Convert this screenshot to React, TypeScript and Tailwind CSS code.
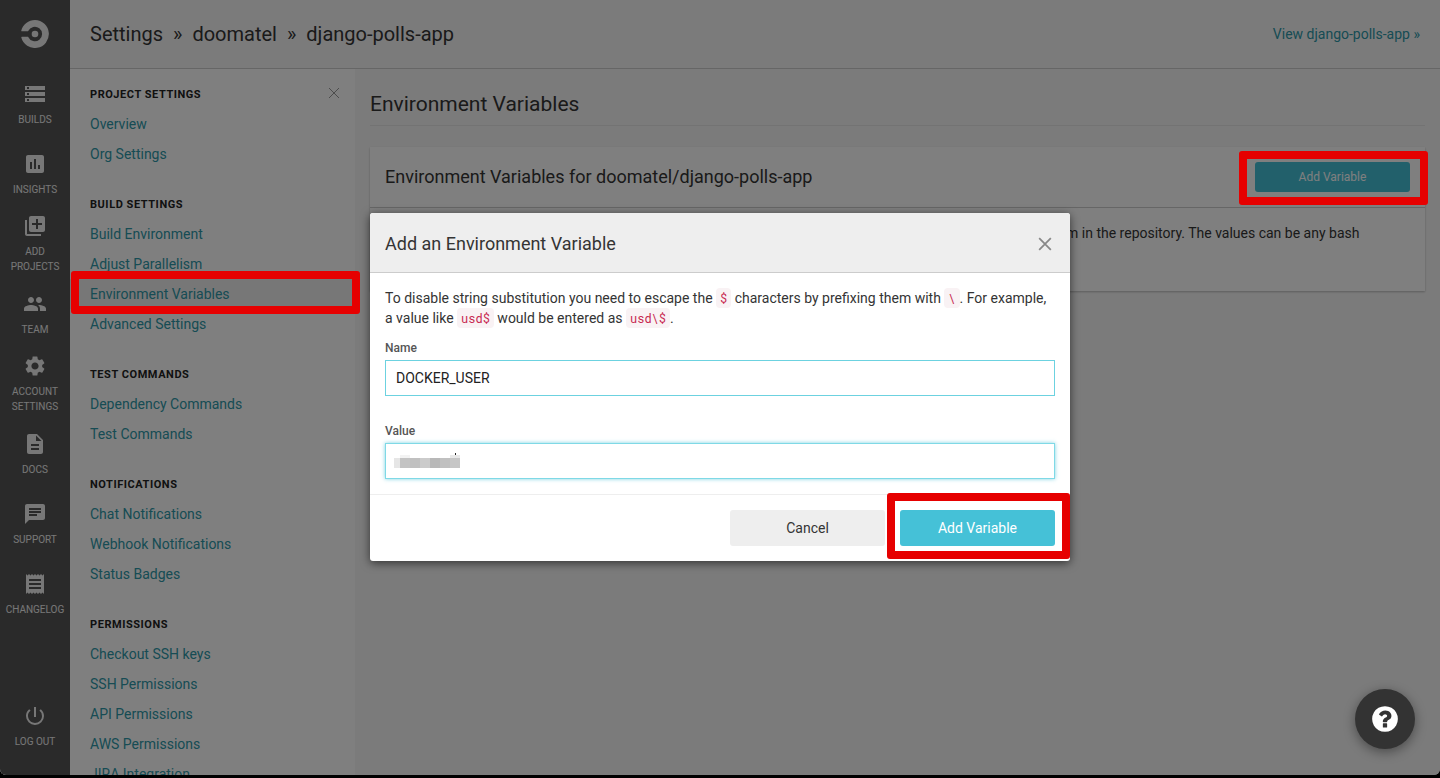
import type { ReactNode } from "react";
import { MdAssessment, MdChat, MdDescription, MdLibraryAdd, MdPeople, MdPowerSettingsNew, MdReceipt, MdSettings, MdStorage } from "react-icons/md";
import type { IconType } from "react-icons";

const railItems: { icon: IconType; label: string }[] = [
  { icon: MdStorage, label: "Builds" },
  { icon: MdAssessment, label: "Insights" },
  { icon: MdLibraryAdd, label: "Add Projects" },
  { icon: MdPeople, label: "Team" },
  { icon: MdSettings, label: "Account Settings" },
  { icon: MdDescription, label: "Docs" },
  { icon: MdChat, label: "Support" },
  { icon: MdReceipt, label: "Changelog" },
];

const sections = [
  { title: "Project Settings", links: ["Overview", "Org Settings"] },
  { title: "Build Settings", links: ["Build Environment", "Adjust Parallelism", "Environment Variables", "Advanced Settings"] },
  { title: "Test Commands", links: ["Dependency Commands", "Test Commands"] },
  { title: "Notifications", links: ["Chat Notifications", "Webhook Notifications", "Status Badges"] },
  { title: "Permissions", links: ["Checkout SSH keys", "SSH Permissions", "API Permissions", "AWS Permissions", "JIRA Integration"] },
];

const maskBlocks = [
  "w-[6px] bg-[#e6e6e6]",
  "w-[10px] bg-[#c3c3c3]",
  "w-[10px] bg-[#c0c0c0]",
  "w-[10px] bg-[#cbcbcb]",
  "w-[10px] bg-[#b8b8b8]",
  "w-[10px] bg-[#c0c0c0]",
  "w-[10px] bg-[#c6c6c6]",
];

function Highlight({ className }: { className: string }) {
  return <span aria-hidden="true" className={`pointer-events-none absolute z-20 rounded-[3px] border-8 border-[#e60000] ${className}`} />;
}

function Cross({ size, className }: { size: number; className: string }) {
  return (
    <svg width={size} height={size} viewBox="0 0 12 12" fill="none" stroke="currentColor" className={className} aria-hidden="true">
      <path d="M1 1l10 10M11 1L1 11" />
    </svg>
  );
}

function Logo() {
  return (
    <svg width="28" height="28" viewBox="0 0 28 28" aria-hidden="true">
      <circle cx="14" cy="14" r="3.3" fill="currentColor" />
      <path
        fill="currentColor"
        d="M14 0C7.500 0 2 4.500.3 10.500c-.1.500.2.800.6.800h5.700c.3 0 .5-.1.6-.4A7.300 7.300 0 1 1 7.200 17.100c-.1-.3-.3-.4-.6-.4H.900c-.4 0-.7.4-.6.800A14 14 0 1 0 14 0z"
      />
    </svg>
  );
}

function RailItem({ icon: Icon, label }: { icon: IconType; label: string }) {
  return (
    <a href="#" className="flex h-[70px] flex-col items-center justify-center gap-[6px] text-center text-[10px] leading-[15px] uppercase">
      <Icon size={24} />
      <span className="w-min">{label}</span>
    </a>
  );
}

function Code({ children }: { children: ReactNode }) {
  return <code className="rounded bg-[#f9f2f4] px-1 py-[2px] font-['Roboto_Mono','DejaVu_Sans_Mono',monospace] text-[12px] text-[#c7254e]">{children}</code>;
}

export default function App() {
  return (
    <div className="h-screen bg-black pb-[3px] font-[Roboto,sans-serif] text-[14px] leading-5 text-[#343434]">
      <div className="relative flex h-full overflow-hidden rounded-b-md bg-[#f7f7f7]">
        <nav className="flex w-[70px] shrink-0 flex-col bg-[#555] text-[#eee]">
          <a href="#" aria-label="Home" className="flex h-[68px] items-center justify-center">
            <Logo />
          </a>
          <div className="flex flex-1 flex-col pt-px">
            {railItems.map((item) => (
              <RailItem key={item.label} {...item} />
            ))}
          </div>
          <div className="pb-[14px]">
            <RailItem icon={MdPowerSettingsNew} label="Log&nbsp;Out" />
          </div>
        </nav>

        <div className="flex min-w-0 flex-1 flex-col">
          <header className="flex h-[69px] shrink-0 items-center justify-between border-b border-[#ccc] px-5">
            <ol className="flex gap-[10px] text-[20px] leading-6">
              <li>Settings</li>
              <li aria-hidden="true">»</li>
              <li>doomatel</li>
              <li aria-hidden="true">»</li>
              <li>django-polls-app</li>
            </ol>
            <a href="#" className="text-[#2e98a8]">View django-polls-app »</a>
          </header>

          <div className="flex min-h-0 flex-1">
            <aside className="relative w-[285px] shrink-0 bg-white pt-4">
              <button type="button" aria-label="Close menu" className="absolute top-[18px] right-[15px] text-[#999]">
                <Cross size={12} className="stroke-1" />
              </button>
              {sections.map((section) => (
                <section key={section.title} className="pb-[26px]">
                  <h2 className="px-5 pb-1 text-[11px] leading-5 font-bold tracking-wider text-[#222] uppercase">{section.title}</h2>
                  <ul className="text-[#2e98a8]">
                    {section.links.map((link) => {
                      const active = link === "Environment Variables";
                      return (
                        <li key={link} className={active ? "relative bg-[#eee]" : ""}>
                          <a href="#" className="block px-5 py-[5px]">{link}</a>
                          {active && <Highlight className="-top-2 -right-[5px] -bottom-[5px] left-px" />}
                        </li>
                      );
                    })}
                  </ul>
                </section>
              ))}
            </aside>

            <main className="min-w-0 flex-1 px-[15px] pt-[20px]">
              <h1 className="border-b border-[#e6e6e6] pb-[6px] text-[21px] leading-[30px]">Environment Variables</h1>
              <section className="mt-[21px] bg-white shadow-[0_1px_2px_rgba(0,0,0,0.25)]">
                <div className="flex h-[61px] items-center justify-between border-b border-[#ccc] px-[15px]">
                  <h2 className="text-[18px] leading-6">Environment Variables for doomatel/django-polls-app</h2>
                  <div className="relative">
                    <button type="button" className="block h-[30px] w-[155px] rounded-[3px] bg-[#45c1d7] text-[12px] text-white">
                      Add Variable
                    </button>
                    <Highlight className="-top-[11px] -right-[18px] -bottom-[13px] -left-4" />
                  </div>
                </div>
                <div className="px-[15px] pt-[15px] pb-[28px]">
                  <p>
                    Add environment variables to the build. You can add sensitive data (e.g. API keys) here, rather than placing them in the repository. The values can be any bash expression.
                  </p>
                </div>
              </section>
            </main>
          </div>
        </div>

        <div className="absolute inset-0 z-10 flex items-center justify-center bg-black/50 pb-px">
          <form role="dialog" aria-labelledby="dialog-title" className="w-[700px] rounded-[3px] bg-white shadow-[0_2px_10px_rgba(0,0,0,0.6)]" onSubmit={(event) => event.preventDefault()}>
            <div className="flex h-[60px] items-center justify-between rounded-t-[3px] border-b border-[#ccc] bg-[#eee] px-[15px] pt-[3px]">
              <h2 id="dialog-title" className="text-[18px] leading-6">Add an Environment Variable</h2>
              <button type="button" aria-label="Close" className="mr-[3px] text-[#888]">
                <Cross size={14} className="stroke-[1.5]" />
              </button>
            </div>
            <div className="flex flex-col p-[15px]">
              <p className="mb-[10px]">
                To disable string substitution you need to escape the <Code>$</Code> characters by prefixing them with <Code>\</Code>. For example, a value like <Code>usd$</Code> would be entered as <Code>usd\$</Code>.
              </p>
              <label htmlFor="variable-name" className="mb-[2px] text-[12px] leading-5 font-medium text-[#555]">Name</label>
              <input id="variable-name" defaultValue="DOCKER_USER" className="mb-[25px] h-[36px] border border-[#6cd2e0] px-[10px] text-[#222] outline-none" />
              <label htmlFor="variable-value" className="mb-[2px] text-[12px] leading-5 font-medium text-[#555]">Value</label>
              <div className="relative flex">
                <input id="variable-value" className="h-[36px] flex-1 border border-[#7fd9e6] px-[10px] shadow-[0_0_4px_rgba(69,193,215,0.7)] outline-none" />
                <div aria-hidden="true" className="absolute top-[15px] left-[9px] flex h-[10px]">
                  {maskBlocks.map((block, index) => (
                    <span key={index} className={block} />
                  ))}
                </div>
                <span aria-hidden="true" className="absolute top-[12px] left-[15px] h-[3px] w-[10px] bg-[#f3f3f3]" />
                <span aria-hidden="true" className="absolute top-[12px] left-[65px] h-[3px] w-[10px] bg-[#e8e8e8]" />
                <span aria-hidden="true" className="absolute top-[10px] left-[70px] h-[2px] w-px bg-[#222]" />
              </div>
            </div>
            <div className="flex justify-end gap-[15px] border-t border-[#eee] p-[15px]">
              <button type="button" className="h-[36px] w-[155px] rounded-[3px] bg-[#eee]">Cancel</button>
              <div className="relative">
                <button type="submit" className="block h-[36px] w-[155px] rounded-[3px] bg-[#45c1d7] text-white">Add Variable</button>
                <Highlight className="-top-[17px] -right-[15px] -bottom-[13px] -left-[13px]" />
              </div>
            </div>
          </form>
        </div>

        <button type="button" aria-label="Help" className="absolute right-[25px] bottom-[26px] z-20 flex size-[60px] items-center justify-center rounded-full bg-[#333] text-white shadow-[0_3px_12px_rgba(0,0,0,0.4)]">
          <svg width="30" height="30" viewBox="0 0 1792 1792" fill="currentColor" aria-hidden="true">
            <path d="M1024 1376v-192q0-14-9-23t-23-9h-192q-14 0-23 9t-9 23v192q0 14 9 23t23 9h192q14 0 23-9t9-23zm256-672q0-88-55.500-163t-138.500-116-170-41q-243 0-371 213-15 24 8 42l132 100q7 6 19 6 16 0 25-12 53-68 86-92 34-24 86-24 48 0 85.500 26t37.500 59q0 38-20 61t-68 45q-63 28-115.500 86.500t-52.500 125.500v36q0 14 9 23t23 9h192q14 0 23-9t9-23q0-19 21.500-49.500t54.500-49.500q32-18 49-28.500t46-35 44.500-48 28-60.500 12.500-81zm384 192q0 209-103 385.500t-279.500 279.500-385.500 103-385.500-103-279.500-279.500-103-385.500 103-385.500 279.500-279.500 385.500-103 385.500 103 279.500 279.500 103 385.500z" />
          </svg>
        </button>
      </div>
    </div>
  );
}
